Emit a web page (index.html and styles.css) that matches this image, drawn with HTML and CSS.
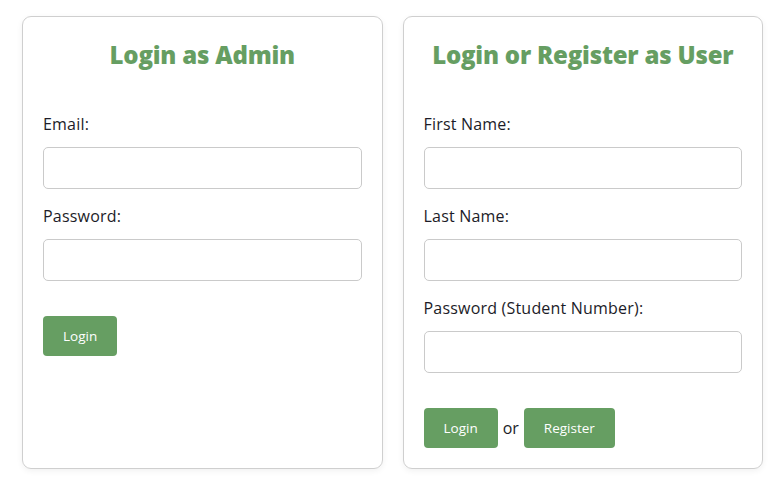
FILE: index.html
```html
<!DOCTYPE html>
<html>
<head>
<meta charset="utf-8">
<link rel="stylesheet" href="styles.css">
</head>
<body>
<div class="wrap">
  <section class="card">
    <h2 class="title">Login as Admin</h2>
    <form class="form">
      <label class="label">Email:</label>
      <input class="input" type="text">
      <label class="label">Password:</label>
      <input class="input" type="password">
      <div class="actions">
        <button class="btn" type="button">Login</button>
      </div>
    </form>
  </section>
  <section class="card">
    <h2 class="title">Login or Register as User</h2>
    <form class="form">
      <label class="label">First Name:</label>
      <input class="input" type="text">
      <label class="label">Last Name:</label>
      <input class="input" type="text">
      <label class="label">Password (Student Number):</label>
      <input class="input" type="password">
      <div class="actions">
        <button class="btn" type="button">Login</button>
        <span class="or">or</span>
        <button class="btn" type="button">Register</button>
      </div>
    </form>
  </section>
</div>
</body>
</html>
```
FILE: styles.css
```css
* { box-sizing: border-box; }
body {
  margin: 0;
  background: #fff;
  font-family: "Open Sans", "DejaVu Sans", sans-serif;
  color: #1c1c28;
}
.wrap {
  display: flex;
  gap: 20px;
  padding: 16px 12px 12px 22px;
  align-items: stretch;
}
.card {
  width: 361px;
  border: 1px solid #cfcfcf;
  border-radius: 9px;
  padding: 20px;
  box-shadow: 0 2px 6px rgba(0,0,0,0.06);
}
.title {
  margin: 0 0 39px 0;
  text-align: center;
  font-size: 24px;
  line-height: 36px;
  font-weight: 800;
  color: #669e62;
  letter-spacing: -0.2px;
}
.form {
  display: flex;
  flex-direction: column;
}
.label {
  font-size: 16px;
  line-height: 25px;
  margin-bottom: 10px;
  letter-spacing: 0.2px;
}
.input {
  height: 42px;
  border: 1px solid #cacaca;
  border-radius: 5px;
  margin-bottom: 15px;
  width: 100%;
}
.actions {
  margin-top: 20px;
  display: flex;
  align-items: center;
  gap: 5px;
}
.btn {
  height: 40px;
  padding: 0 20px;
  background: #669e62;
  color: #fff;
  border: none;
  border-radius: 4px;
  font-family: inherit;
  font-size: 13.5px;
}
.or {
  font-size: 16px;
}
```
